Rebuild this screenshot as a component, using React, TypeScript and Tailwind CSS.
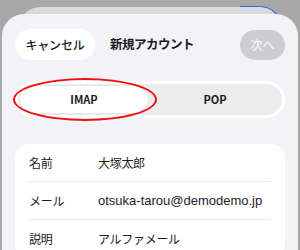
import React from "react";

const rows = [
  { label: "名前", value: "大塚太郎", latin: false },
  { label: "メール", value: "otsuka-tarou@demodemo.jp", latin: true },
  { label: "説明", value: "アルファメール", latin: false },
];

export default function App() {
  return (
    <div className="relative w-[300px] h-[250px] overflow-hidden bg-[#a8a8a8] font-['Noto_Sans_CJK_JP','Noto_Sans',sans-serif]">
      {/* sheets stacked behind */}
      <div className="absolute left-[240px] right-[18px] top-[6px] h-[40px] rounded-tr-[22px] bg-[#2d6fd8]" />
      <div className="absolute left-[20px] right-[20px] top-[7px] h-[40px] rounded-t-[20px] bg-[#d9d9dd]" />

      <div className="relative mt-[14px] mx-[2px] h-[236px] rounded-t-[22px] bg-[#f2f2f7]">
        <div className="flex items-center pl-[13px] pr-[13px] pt-[15px]">
          <div className="flex h-[31px] w-[80px] items-center justify-center rounded-full bg-white text-[12px] font-medium tracking-[-0.2px] text-[#1c1c1e]">
            キャンセル
          </div>
          <div className="ml-[15px] text-[12.5px] font-bold tracking-[-0.5px] text-[#1c1c1e]">新規アカウント</div>
          <div className="ml-auto flex h-[30px] w-[45px] items-center justify-center rounded-full bg-[#cdcdd1] text-[12px] font-medium text-[#f4f4f6]">
            次へ
          </div>
        </div>

        <div className="relative mx-[13px] mt-[21px]">
          <div className="flex h-[37px] rounded-full border-[3px] border-white bg-[#ececec] p-[1px]">
            <div className="flex w-[130px] items-center justify-center rounded-full border border-[#e6e6e6] bg-white text-[11px] font-semibold text-[#1c1c1e]">
              IMAP
            </div>
            <div className="flex flex-1 items-center justify-center text-[11px] font-semibold text-[#1c1c1e]">
              POP
            </div>
          </div>
          <div className="absolute left-[-2px] top-[-3px] h-[43px] w-[144px] rounded-[50%] border-2 border-[#ee1111]" />
        </div>

        <div className="mx-[13px] mt-[26px] rounded-[14px] bg-white px-[14px]">
          {rows.map((r, i) => (
            <div
              key={r.label}
              className={`flex h-[38px] items-center whitespace-nowrap text-[12px] tracking-[-0.3px] text-[#1c1c1e] ${i < rows.length - 1 ? "border-b border-[#e9e9ee]" : ""}`}
            >
              <div className="w-[69px]">{r.label}</div>
              {r.latin ? (
                <div className="font-['Liberation_Sans',Arial,sans-serif] text-[13px] tracking-normal">{r.value}</div>
              ) : (
                <div>{r.value}</div>
              )}
            </div>
          ))}
        </div>
      </div>
    </div>
  );
}
